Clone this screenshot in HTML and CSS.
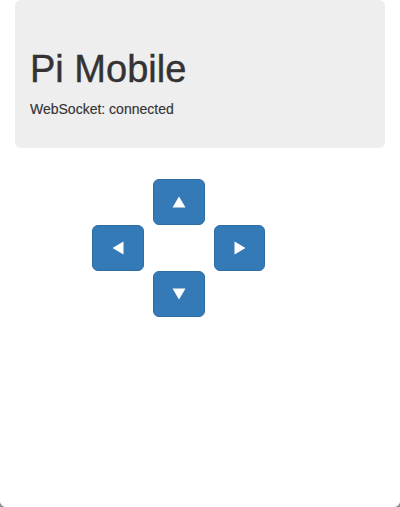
FILE: index.html
```html
<!DOCTYPE html>
<html>
<head>
<meta charset="utf-8">
<link rel="stylesheet" href="styles.css">
</head>
<body>
<div class="container">
  <div class="jumbotron">
    <h1 class="title">Pi Mobile</h1>
    <p class="status">WebSocket: connected</p>
  </div>
  <div class="pad">
    <span></span>
    <button class="btn" aria-label="up"><svg width="14" height="12" viewBox="0 0 14 12"><polygon points="7,0.5 13.5,11.5 0.5,11.5" fill="#fff"/></svg></button>
    <span></span>
    <button class="btn" aria-label="left"><svg width="12" height="14" viewBox="0 0 12 14"><polygon points="0.5,7 11.5,0.5 11.5,13.5" fill="#fff"/></svg></button>
    <span></span>
    <button class="btn" aria-label="right"><svg width="12" height="14" viewBox="0 0 12 14"><polygon points="11.5,7 0.5,0.5 0.5,13.5" fill="#fff"/></svg></button>
    <span></span>
    <button class="btn" aria-label="down"><svg width="14" height="12" viewBox="0 0 14 12"><polygon points="7,11.5 13.5,0.5 0.5,0.5" fill="#fff"/></svg></button>
    <span></span>
  </div>
</div>
<div class="corner corner-left"></div>
<div class="corner corner-right"></div>
</body>
</html>
```

FILE: styles.css
```css
html, body {
  margin: 0;
  padding: 0;
  background: #fff;
}
body {
  font-family: "Liberation Sans", Arial, sans-serif;
  color: #333;
  font-size: 14px;
  line-height: 1.42857;
}
.container {
  padding: 0 15px;
}
.jumbotron {
  background: #eee;
  border-radius: 6px;
  padding: 30px 15px 29px;
  margin-bottom: 31px;
}
.title {
  margin: 19px 0 8px;
  font-size: 38px;
  font-weight: 500;
  line-height: 1.1;
  color: #333;
  -webkit-text-stroke: 0.4px #333;
}
.status {
  margin: 0;
  font-size: 14px;
  line-height: 20px;
  -webkit-text-stroke: 0.15px #333;
}
.pad {
  display: grid;
  grid-template-columns: 52px 52px 51px;
  grid-template-rows: 46px 46px 46px;
  column-gap: 9px;
  margin-left: 77px;
  width: max-content;
}
.btn {
  display: flex;
  align-items: center;
  justify-content: center;
  padding: 0;
  margin: 0;
  background: #337ab7;
  border: 1px solid #2e6da4;
  border-radius: 6px;
  cursor: pointer;
}
.btn svg {
  display: block;
}
.corner {
  position: fixed;
  bottom: 0;
  width: 6px;
  height: 6px;
}
.corner-left {
  left: 0;
  background: radial-gradient(circle at 6px 0, transparent 5.5px, #8e8e93 6.5px);
}
.corner-right {
  right: 0;
  background: radial-gradient(circle at 0 0, transparent 5.5px, #8e8e93 6.5px);
}
```
